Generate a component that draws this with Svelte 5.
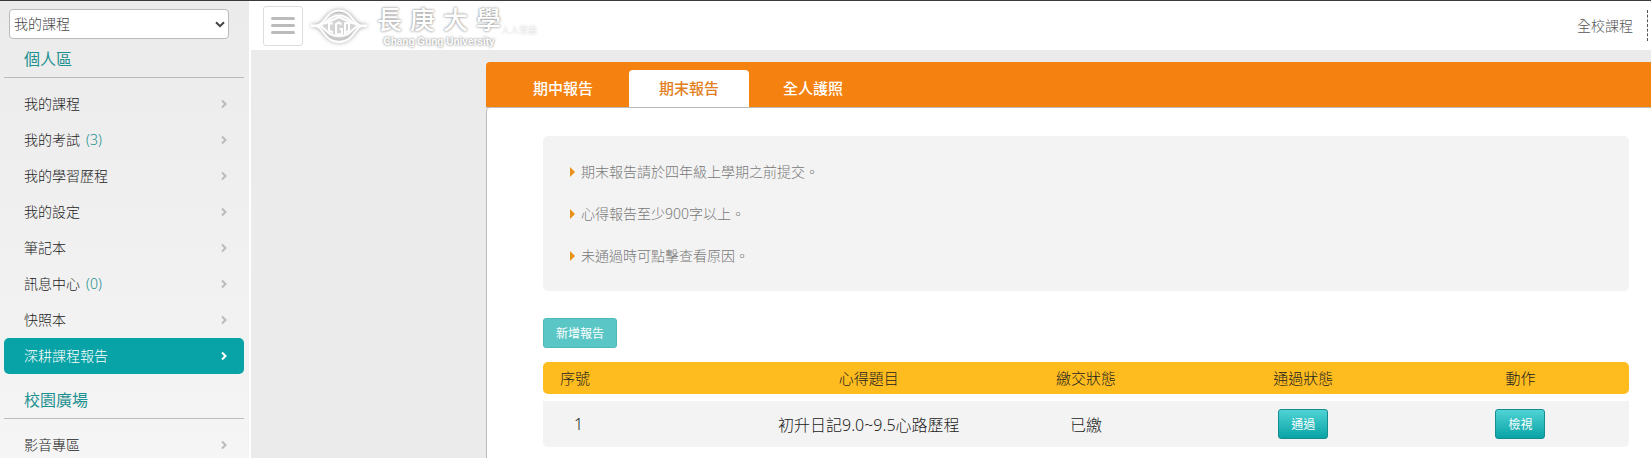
<script>
    let course = $state('我的課程');
    let activeTab = $state('期末報告');

    const sections = [
        {
            title: '個人區',
            items: [
                {name: '我的課程'},
                {name: '我的考試', count: 3},
                {name: '我的學習歷程'},
                {name: '我的設定'},
                {name: '筆記本'},
                {name: '訊息中心', count: 0},
                {name: '快照本'},
                {name: '深耕課程報告', active: true}
            ]
        },
        {
            title: '校園廣場',
            items: [{name: '影音專區'}]
        }
    ];

    const tabs = ['期中報告', '期末報告', '全人護照'];

    const notes = [
        '期末報告請於四年級上學期之前提交。',
        '心得報告至少900字以上。',
        '未通過時可點擊查看原因。'
    ];

    const reports = [
        {title: '初升日記9.0~9.5心路歷程', status: '已繳', result: '通過'}
    ];
</script>

<div class="page">
    <aside class="sidebar">
        <div class="picker">
            <select bind:value={course} aria-label="課程">
                <option>我的課程</option>
                <option>全校課程</option>
            </select>
            <svg class="caret" viewBox="0 0 10 7" aria-hidden="true"><path d="M1 1.2l4 4 4-4" /></svg>
        </div>

        {#each sections as section}
        <nav class="section" aria-label={section.title}>
            <h2>{section.title}</h2>
            <ul>
                {#each section.items as item}
                <li>
                    <a href="#menu" class:active={item.active}>
                        <span class="label">{item.name}{#if item.count !== undefined}<span class="count">({item.count})</span>{/if}</span>
                        <svg viewBox="0 0 6 10" aria-hidden="true"><path d="M1 1.5L4.500 5 1 8.5" /></svg>
                    </a>
                </li>
                {/each}
            </ul>
        </nav>
        {/each}
    </aside>

    <div class="content">
        <header>
            <button class="toggle" type="button" aria-label="選單">
                <span></span><span></span><span></span>
            </button>

            <a class="logo" href="#home">
                <svg class="emblem" viewBox="0 0 60 40" aria-hidden="true">
                    <path class="fill" d="M8 19.500c7-1 10-13 22-13s15 12 22 13c-7 2-8 13-22 13s-15-11-22-13z" />
                    <g class="lines">
                        <path d="M2 19.500h5c9 0 10-15 23-15s14 15 23 15h5M2 20h5c7 1 9 16 23 16s16-15 23-16h5" />
                        <path d="M10 19.500c8-1 9-10 20-10s12 9 20 10c-7 2-8 10.500-20 10.500s-13-8.500-20-10.500z" />
                        <path d="M16 17.500l14-6.500 14 6.500" />
                    </g>
                    <path class="mark" d="M24 17.500h-4v7l4 2M32.500 18.500l-2.500-2-3 1.500v9.500l3 1.500 3-1.500v-4.500h-2.500M36 16.500v10.500l4-2.500v-7.500h-4" />
                </svg>
                <span class="words">
                    <span class="name"><span>長</span><span>庚</span><span>大</span><span>學</span></span>
                    <span class="english">Chang Gung University</span>
                </span>
                <span class="tagline">人人受益</span>
            </a>

            <a class="all" href="#courses">全校課程</a>
        </header>

        <main>
            <div class="tabs" role="tablist">
                {#each tabs as tab}
                <button type="button" role="tab" aria-selected={tab === activeTab} class:selected={tab === activeTab} onclick={() => activeTab = tab}>{tab}</button>
                {/each}
            </div>

            <div class="panel">
                <ul class="notes">
                    {#each notes as note}
                    <li><span>{note}</span></li>
                    {/each}
                </ul>

                <button class="add" type="button">新增報告</button>

                <table>
                    <thead>
                        <tr>
                            <th class="number">序號</th>
                            <th>心得題目</th>
                            <th>繳交狀態</th>
                            <th>通過狀態</th>
                            <th>動作</th>
                        </tr>
                    </thead>
                    <tbody>
                        {#each reports as report, index}
                        <tr>
                            <td class="number">{index + 1}</td>
                            <td>{report.title}</td>
                            <td>{report.status}</td>
                            <td><button class="action" type="button">{report.result}</button></td>
                            <td><button class="action" type="button">檢視</button></td>
                        </tr>
                        {/each}
                    </tbody>
                </table>
            </div>
        </main>
    </div>
</div>

<style>
    :global(body) {
        background-color: #ebebeb;
        overflow: hidden;
    }
    .page {
        --teal: #08a3a6;
        --tealText: #1d9090;
        --orange: #f58110;
        display: flex;
        height: 100vh;
        overflow: hidden;
        box-sizing: border-box;
        border-top: 1px solid #3d3a3c;
        font-family: "Noto Sans", "Noto Sans CJK TC", sans-serif;
        font-size: 14px;
        font-weight: 300;
        color: #222;
    }
    button, select {
        font-family: inherit;
        font-weight: inherit;
    }
    a {
        color: inherit;
        text-decoration: none;
    }
    ul {
        list-style: none;
        margin: 0;
        padding: 0;
    }

    .sidebar {
        flex: 0 0 240px;
        padding: 8px 5px 0 4px;
        border-right: 2px solid #fff;
        background: linear-gradient(#ebebeb, #f5f5f5);
    }
    .picker {
        position: relative;
        margin: 0 15px 0 5px;
    }
    .picker select {
        display: block;
        width: 100%;
        height: 30px;
        padding: 0 4px 1px;
        appearance: none;
        border: 1px solid #bbb;
        border-radius: 4px;
        background-color: #fff;
        color: #444;
        font-size: 14px;
    }
    .caret {
        position: absolute;
        right: 4px;
        top: 12px;
        width: 10px;
        height: 7px;
    }
    .caret path {
        fill: none;
        stroke: #444;
        stroke-width: 2;
    }
    .section h2 {
        margin: 0 0 8px;
        padding: 0 20px;
        height: 38px;
        line-height: 40px;
        border-bottom: 1px solid #bbb;
        color: var(--tealText);
        font-size: 16px;
        font-weight: 400;
    }
    .section + .section h2 {
        margin-top: 6px;
    }
    .section a {
        display: flex;
        align-items: center;
        justify-content: space-between;
        height: 36px;
        padding: 0 17px 0 20px;
        border-radius: 5px;
    }
    .section a svg {
        width: 6px;
        height: 10px;
        fill: none;
        stroke: #bbb;
        stroke-width: 2;
    }
    .section a.active {
        background-color: var(--teal);
        color: #fff;
    }
    .section a.active svg {
        stroke: #fff;
    }
    .label {
        padding-bottom: 3px;
    }
    .count {
        margin-left: 6px;
        color: var(--tealText);
    }

    .content {
        flex: 1;
        min-width: 0;
        display: flex;
        flex-direction: column;
    }
    header {
        display: flex;
        align-items: center;
        flex: 0 0 49px;
        padding-left: 12px;
        background-color: #fff;
    }
    .toggle {
        display: flex;
        flex-direction: column;
        justify-content: center;
        gap: 4px;
        width: 40px;
        height: 40px;
        padding: 0 7px;
        border: 1px solid #ddd;
        border-radius: 3px;
        background-color: #fff;
    }
    .toggle span {
        height: 3px;
        border-radius: 2px;
        background-color: #bbb;
    }
    .logo {
        display: flex;
        align-items: center;
        margin-left: 6px;
        color: #fff;
    }
    .emblem {
        width: 60px;
        height: 40px;
        fill: none;
        stroke: #fff;
        stroke-width: 2;
        filter: drop-shadow(0 0 2px #999);
    }
    .emblem .fill {
        fill: #d4d4d4;
        stroke: none;
    }
    .words {
        display: flex;
        flex-direction: column;
        align-items: center;
        margin-left: 8px;
        text-shadow: 0 0 2px #999, 0 0 3px #aaa;
    }
    .name {
        display: flex;
        gap: 8px;
        font-family: "Noto Sans CJK TC", sans-serif;
        font-size: 25px;
        font-weight: 500;
        line-height: 36px;
        margin-top: -4px;
    }
    .english {
        font-family: "Liberation Sans", Arial, sans-serif;
        font-size: 10px;
        font-weight: 700;
        line-height: 12px;
    }
    .tagline {
        align-self: flex-end;
        margin-bottom: 12px;
        font-size: 9px;
        line-height: 12px;
        text-shadow: 0 0 2px #aaa;
    }
    .all {
        margin-left: auto;
        padding: 0 14px 0 0;
        margin-right: 3px;
        border-right: 1px dashed #555;
        color: #555;
        line-height: 31px;
    }

    main {
        flex: 1;
        display: flex;
        flex-direction: column;
        margin: 12px 0 0 235px;
    }
    .tabs {
        display: flex;
        align-items: flex-end;
        flex: 0 0 45px;
        border-radius: 4px 0 0 0;
        border-bottom: 1px solid #bbb;
        background-color: var(--orange);
    }
    .tabs button {
        height: 37px;
        padding: 0 30px 2px;
        border: 0;
        border-radius: 4px 4px 0 0;
        background: none;
        color: #fff;
        font-size: 15px;
        font-weight: 500;
    }
    .tabs button:first-child {
        margin-left: 17px;
    }
    .tabs button.selected {
        margin: 0 4px 0 6px;
        background-color: #fff;
        color: #e2801f;
    }
    .panel {
        flex: 1;
        padding: 28px 22px 0 56px;
        border-left: 1px solid #bbb;
        border-radius: 4px 0 0 0;
        background-color: #fff;
    }
    .notes {
        padding: 15px 27px 14px;
        border-radius: 5px;
        background-color: #f3f3f3;
        color: #777;
    }
    .notes li {
        display: flex;
        align-items: center;
        gap: 6px;
        height: 42px;
    }
    .notes li span {
        padding-bottom: 2px;
    }
    .notes li::before {
        content: "";
        border: 5px solid transparent;
        border-left-color: #e8921a;
        border-right: 0;
    }
    .add {
        display: block;
        height: 30px;
        margin: 27px 0 14px;
        padding: 0 12px;
        border: 1px solid #4fb9b9;
        border-radius: 3px;
        background-color: #5bc6c6;
        color: #fff;
        font-size: 12px;
        font-weight: 400;
    }
    table {
        width: 100%;
        table-layout: fixed;
        border-collapse: separate;
        border-spacing: 0;
        text-align: center;
    }
    th, td {
        padding: 0;
    }
    th {
        height: 30px;
        padding-bottom: 2px;
        background-color: #febc1e;
        font-size: 15px;
        font-weight: inherit;
    }
    td {
        height: 46px;
        border-top: 7px solid #fff;
        background-color: #f3f3f3;
        background-clip: padding-box;
        font-size: 16px;
    }
    th:first-child, td:first-child {
        border-radius: 5px 0 0 5px;
    }
    th:last-child, td:last-child {
        border-radius: 0 5px 5px 0;
    }
    .number {
        width: 20%;
        box-sizing: border-box;
        text-align: left;
    }
    th.number {
        height: 32px;
        padding-left: 17px;
    }
    td.number {
        padding-left: 31px;
    }
    .action {
        height: 30px;
        padding: 0 12px;
        border: 1px solid #158c8e;
        border-radius: 3px;
        background: linear-gradient(#50d3d4, #08a3a6);
        color: #fff;
        font-size: 12px;
        font-weight: 400;
    }
</style>
